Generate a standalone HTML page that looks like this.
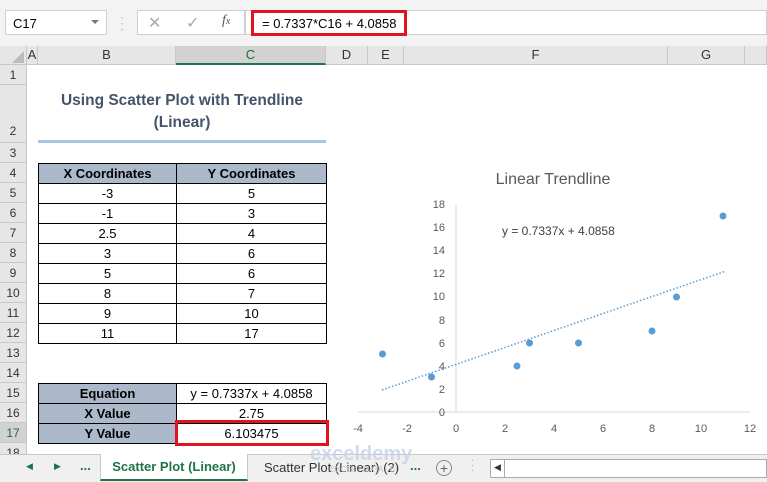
<!DOCTYPE html>
<html><head><style>
*{margin:0;padding:0;box-sizing:border-box}
body{width:767px;height:482px;overflow:hidden;background:#fff;font-family:"Liberation Sans",sans-serif;position:relative;font-size:13px;color:#000}
.a{position:absolute}
.hdr{background:#e6e6e6;color:#333;font-size:13px;text-align:center;border-right:1px solid #c8c8c8;border-bottom:1px solid #c8c8c8}
.rn{position:absolute;left:0;width:27px;background:#e6e6e6;color:#333;font-size:12px;text-align:center;border-bottom:1px solid #c8c8c8;border-right:1px solid #c8c8c8}
.c{position:absolute;border:1px solid #000;text-align:center;font-size:13px;line-height:19px}
.h{background:#acb9ca;font-weight:bold}
</style></head><body>
<div class="a" style="left:0;top:0;width:767px;height:46px;background:#f3f3f3"></div>
<div class="a" style="left:5px;top:10px;width:102px;height:25px;background:#fff;border:1px solid #d0d0d0;font-size:13px;padding:5px 0 0 7px">C17</div>
<div class="a" style="left:91px;top:20px;width:0;height:0;border-left:4px solid transparent;border-right:4px solid transparent;border-top:4px solid #777"></div>
<div class="a" style="left:120px;top:14px;color:#aaa;font-size:12px;line-height:6px">·<br>·<br>·</div>
<div class="a" style="left:137px;top:10px;width:108px;height:25px;background:#fff;border:1px solid #d0d0d0"></div>
<div class="a" style="left:148px;top:13px;color:#aaa;font-size:16px">✕</div>
<div class="a" style="left:186px;top:13px;color:#aaa;font-size:16px">✓</div>
<div class="a" style="left:222px;top:13px;color:#555;font-size:14px;font-style:italic;font-family:'Liberation Serif',serif">f<span style="font-size:10px">x</span></div>
<div class="a" style="left:245px;top:10px;width:522px;height:25px;background:#fff;border:1px solid #d0d0d0"></div>
<div class="a" style="left:251px;top:10px;width:156px;height:26px;border:3px solid #e0141e;font-size:13px;padding:3px 0 0 8px">= 0.7337*C16 + 4.0858</div>
<div class="a hdr" style="left:0;top:46px;width:27px;height:19px"></div>
<div class="a" style="left:12px;top:51px;width:0;height:0;border-left:12px solid transparent;border-bottom:12px solid #bbb"></div>
<div class="a hdr" style="left:27px;top:46px;width:11px;height:19px;line-height:18px">A</div>
<div class="a hdr" style="left:38px;top:46px;width:138px;height:19px;line-height:18px">B</div>
<div class="a hdr" style="left:176px;top:46px;width:150px;height:19px;line-height:18px;background:#d2d2d2;color:#1e6b3c;border-bottom:2px solid #217346">C</div>
<div class="a hdr" style="left:326px;top:46px;width:42px;height:19px;line-height:18px">D</div>
<div class="a hdr" style="left:368px;top:46px;width:36px;height:19px;line-height:18px">E</div>
<div class="a hdr" style="left:404px;top:46px;width:264px;height:19px;line-height:18px">F</div>
<div class="a hdr" style="left:668px;top:46px;width:77px;height:19px;line-height:18px">G</div>
<div class="a hdr" style="left:745px;top:46px;width:22px;height:19px"></div>
<div class="rn" style="top:65px;height:20px;line-height:20px">1</div>
<div class="rn" style="top:85px;height:58px;line-height:92px">2</div>
<div class="rn" style="top:143px;height:20px;line-height:20px">3</div>
<div class="rn" style="top:163px;height:20px;line-height:20px">4</div>
<div class="rn" style="top:183px;height:20px;line-height:20px">5</div>
<div class="rn" style="top:203px;height:20px;line-height:20px">6</div>
<div class="rn" style="top:223px;height:20px;line-height:20px">7</div>
<div class="rn" style="top:243px;height:20px;line-height:20px">8</div>
<div class="rn" style="top:263px;height:20px;line-height:20px">9</div>
<div class="rn" style="top:283px;height:20px;line-height:20px">10</div>
<div class="rn" style="top:303px;height:20px;line-height:20px">11</div>
<div class="rn" style="top:323px;height:20px;line-height:20px">12</div>
<div class="rn" style="top:343px;height:20px;line-height:20px">13</div>
<div class="rn" style="top:363px;height:20px;line-height:20px">14</div>
<div class="rn" style="top:383px;height:20px;line-height:20px">15</div>
<div class="rn" style="top:403px;height:20px;line-height:20px">16</div>
<div class="rn" style="top:423px;height:20px;line-height:20px;background:#d2d2d2;color:#1e6b3c">17</div>
<div class="rn" style="top:443px;height:12px;line-height:20px;overflow:hidden">18</div>
<div class="a" style="left:38px;top:90px;width:288px;text-align:center;font-weight:bold;font-size:15.5px;color:#44546a;line-height:22px">Using Scatter Plot with Trendline<br>(Linear)</div>
<div class="a" style="left:38px;top:140px;width:288px;height:3px;background:#a9c4e4"></div>
<div class="c h" style="left:38px;top:163px;width:139px;height:21px">X Coordinates</div>
<div class="c h" style="left:176px;top:163px;width:151px;height:21px">Y Coordinates</div>
<div class="c" style="left:38px;top:183px;width:139px;height:21px">-3</div><div class="c" style="left:176px;top:183px;width:151px;height:21px">5</div>
<div class="c" style="left:38px;top:203px;width:139px;height:21px">-1</div><div class="c" style="left:176px;top:203px;width:151px;height:21px">3</div>
<div class="c" style="left:38px;top:223px;width:139px;height:21px">2.5</div><div class="c" style="left:176px;top:223px;width:151px;height:21px">4</div>
<div class="c" style="left:38px;top:243px;width:139px;height:21px">3</div><div class="c" style="left:176px;top:243px;width:151px;height:21px">6</div>
<div class="c" style="left:38px;top:263px;width:139px;height:21px">5</div><div class="c" style="left:176px;top:263px;width:151px;height:21px">6</div>
<div class="c" style="left:38px;top:283px;width:139px;height:21px">8</div><div class="c" style="left:176px;top:283px;width:151px;height:21px">7</div>
<div class="c" style="left:38px;top:303px;width:139px;height:21px">9</div><div class="c" style="left:176px;top:303px;width:151px;height:21px">10</div>
<div class="c" style="left:38px;top:323px;width:139px;height:21px">11</div><div class="c" style="left:176px;top:323px;width:151px;height:21px">17</div>
<div class="c h" style="left:38px;top:383px;width:139px;height:21px">Equation</div><div class="c" style="left:176px;top:383px;width:151px;height:21px">y = 0.7337x + 4.0858</div>
<div class="c h" style="left:38px;top:403px;width:139px;height:21px">X Value</div><div class="c" style="left:176px;top:403px;width:151px;height:21px">2.75</div>
<div class="c h" style="left:38px;top:423px;width:139px;height:21px">Y Value</div><div class="c" style="left:176px;top:423px;width:151px;height:21px">6.103475</div>
<div class="a" style="left:175px;top:420px;width:154px;height:26px;border:3px solid #e0141e"></div>
<svg class="a" style="left:0;top:0" width="767" height="482">
<text x="553" y="184" font-size="16" fill="#595959" text-anchor="middle" font-family="Liberation Sans">Linear Trendline</text>
<line x1="456" y1="204" x2="456" y2="412" stroke="#d9d9d9"/>
<line x1="358" y1="412" x2="750" y2="412" stroke="#d9d9d9"/>
<g font-size="11" fill="#595959" text-anchor="end" font-family="Liberation Sans">
<text x="445" y="416">0</text><text x="445" y="393">2</text><text x="445" y="370">4</text><text x="445" y="347">6</text><text x="445" y="324">8</text><text x="445" y="300">10</text><text x="445" y="277">12</text><text x="445" y="254">14</text><text x="445" y="231">16</text><text x="445" y="208">18</text>
</g>
<g font-size="11" fill="#595959" text-anchor="middle" font-family="Liberation Sans">
<text x="358" y="432">-4</text><text x="407" y="432">-2</text><text x="456" y="432">0</text><text x="505" y="432">2</text><text x="554" y="432">4</text><text x="603" y="432">6</text><text x="652" y="432">8</text><text x="701" y="432">10</text><text x="750" y="432">12</text>
</g>
<line x1="382" y1="390" x2="726" y2="271" stroke="#5b9bd5" stroke-width="1.5" stroke-dasharray="1.5,2"/>
<g fill="#5b9bd5">
<circle cx="382.5" cy="354" r="3.5"/><circle cx="431.5" cy="377" r="3.5"/><circle cx="517" cy="366" r="3.5"/><circle cx="529.5" cy="343" r="3.5"/><circle cx="578.5" cy="343" r="3.5"/><circle cx="652" cy="331" r="3.5"/><circle cx="676.5" cy="297" r="3.5"/><circle cx="723" cy="216" r="3.5"/>
</g>
<text x="502" y="235" font-size="12" fill="#404040" font-family="Liberation Sans">y = 0.7337x + 4.0858</text>
</svg>
<div class="a" style="left:0;top:454px;width:767px;height:28px;background:#f0f0f0;border-top:1px solid #c8c8c8"></div>
<div class="a" style="left:26px;top:461px;font-size:9px;color:#217346">◀</div>
<div class="a" style="left:54px;top:461px;font-size:9px;color:#217346">▶</div>
<div class="a" style="left:80px;top:458px;font-weight:bold;color:#217346">...</div>
<div class="a" style="left:100px;top:454px;width:148px;height:27px;background:#fff;border-bottom:2px solid #217346;border-left:1px solid #c8c8c8;border-right:1px solid #c8c8c8;color:#217346;font-weight:bold;font-size:13px;text-align:center;line-height:25px">Scatter Plot (Linear)</div>
<div class="a" style="left:264px;top:460px;font-size:13px;color:#333">Scatter Plot (Linear) (2)</div>
<svg class="a" style="left:310px;top:442px" width="150" height="32"><text x="0" y="18" font-size="20" font-weight="bold" fill="#c5d3e8" font-family="Liberation Sans" opacity="0.8">exceldemy</text><text x="20" y="30" font-size="8" fill="#c8c8c8" font-family="Liberation Sans">EXCEL · DATA · BI</text></svg>
<div class="a" style="left:410px;top:458px;font-weight:bold;color:#217346">...</div>
<div class="a" style="left:436px;top:460px;width:16px;height:16px;border:1px solid #888;border-radius:50%;text-align:center;line-height:14px;color:#666;font-size:14px">+</div>
<div class="a" style="left:471px;top:458px;color:#aaa;font-size:10px;line-height:5px">·<br>·<br>·</div>
<div class="a" style="left:490px;top:459px;width:277px;height:19px;background:#fff;border:1px solid #aaa"></div>
<div class="a" style="left:494px;top:462px;font-size:9px;color:#333">◀</div>
<div class="a" style="left:504px;top:459px;width:1px;height:19px;background:#aaa"></div>
</body></html>
